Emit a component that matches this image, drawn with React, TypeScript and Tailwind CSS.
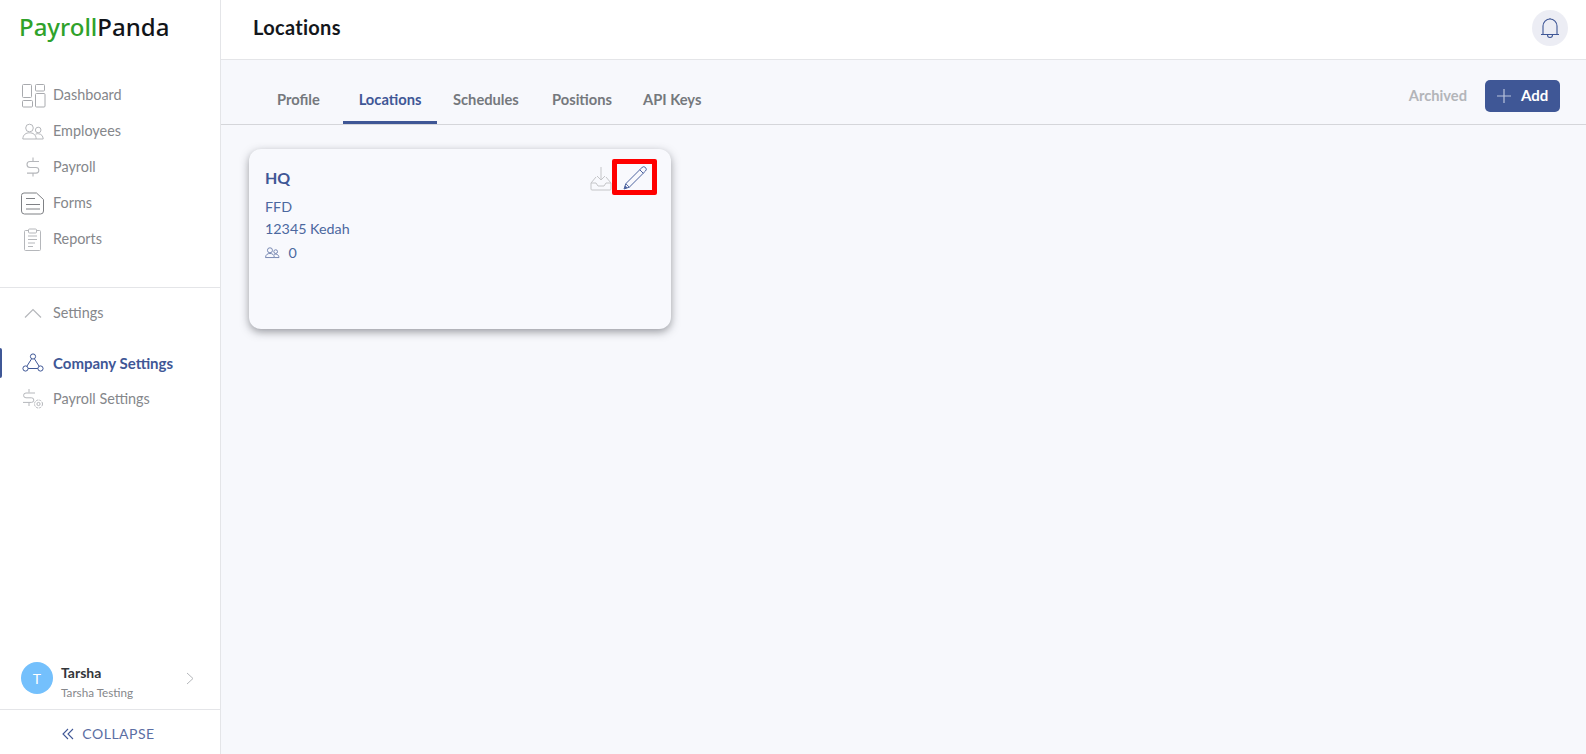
import React from "react";

const g = "#b5b7bb";
const blue = "#3f5796";

function Svg({ w, h, children, className = "" }: { w: number; h: number; children: React.ReactNode; className?: string }) {
  return (
    <svg width={w} height={h} viewBox={`0 0 ${w} ${h}`} fill="none" className={`shrink-0 ${className}`}>
      {children}
    </svg>
  );
}

const DashIcon = () => (
  <Svg w={25} h={25}>
    <g stroke="#a8aaae" strokeWidth="1">
      <rect x="1.5" y="1.5" width="9" height="13" rx="1" />
      <rect x="14.5" y="1.5" width="9" height="6.5" rx="1" />
      <rect x="1.5" y="17.5" width="10" height="6.5" rx="1" />
      <rect x="14.5" y="10.5" width="9.5" height="13.5" rx="1" />
    </g>
  </Svg>
);
const PeopleIcon = ({ c = g, s = 1 }: { c?: string; s?: number }) => (
  <svg width={22 * s} height={17 * s} viewBox="0 0 22 17" fill="none" className="shrink-0">
    <g stroke={c} strokeWidth={s < 1 ? 1.4 : 1}>
      <circle cx="7.5" cy="5" r="3.8" />
      <path d="M0.8 16 C1 11.5 4 9.8 7.5 9.8 C11 9.8 14 11.5 14.2 16 Z" />
      <circle cx="16.2" cy="7" r="2.8" />
      <path d="M13.5 11.2 C14.8 10.6 15.8 10.6 16.8 10.8 C19.5 11.2 21 13 21.2 16 L14.2 16" />
    </g>
  </svg>
);
const DollarIcon = () => (
  <Svg w={16} h={20}>
    <path d="M8 0.5v3.5M8 16v3.5M14 4.5H5a3 3 0 0 0 0 6h6a2.8 2.8 0 0 1 0 5.6H2" stroke={g} strokeWidth="1.1" />
  </Svg>
);
const FormIcon = () => (
  <Svg w={24} h={23}>
    <path d="M3 1h12.5l7 6.5V19a3 3 0 0 1-3 3H3.5a3 3 0 0 1-3-3V3.5A2.5 2.5 0 0 1 3 1Z" stroke="#7f8185" strokeWidth="1" />
    <path d="M5 6.5h9M5 12.5h14M5 17h14" stroke="#7f8185" strokeWidth="1" />
  </Svg>
);
const ReportIcon = () => (
  <Svg w={20} h={24}>
    <g stroke={g} strokeWidth="1">
      <rect x="1.5" y="3.5" width="16" height="20" rx="1" />
      <rect x="5.5" y="2" width="8" height="4" rx="1" fill="#fff" />
      <path d="M5 9h9M5 12.5h9M5 16h7M5 19.5h5" />
    </g>
  </Svg>
);
const NetIcon = () => (
  <Svg w={22} h={20}>
    <g stroke={blue} strokeWidth="1">
      <circle cx="11" cy="3.5" r="2.6" />
      <circle cx="3.5" cy="15.5" r="2.6" />
      <circle cx="18.5" cy="15.5" r="2.6" />
      <path d="M9.6 5.8 4.9 13.2M12.4 5.8l4.7 7.4M6.1 15.5h9.8" />
    </g>
  </Svg>
);
const PaySetIcon = () => (
  <Svg w={22} h={22}>
    <g stroke={g} strokeWidth="1">
      <path d="M7 1v3.5M7 14.5V18M13 5H4a2.4 2.4 0 0 0 0 4.8h5.5a2.3 2.3 0 0 1 0 4.6H1" />
      <circle cx="16.5" cy="16" r="4" fill="#fff" strokeDasharray="2.2 1" />
      <circle cx="16.5" cy="16" r="1.6" />
    </g>
  </Svg>
);

function Nav({ icon, label, active = false }: { icon: React.ReactNode; label: string; active?: boolean }) {
  return (
    <div className="relative h-9 flex items-center pl-[20px]">
      {active && <div className="absolute left-0 top-[3px] h-[30px] w-[2px] rounded-r bg-[#3f5796]" />}
      <div className="w-[26px] h-9 flex items-center justify-center mr-[7px]">{icon}</div>
      <span className={active ? "text-[15px] font-bold text-[#3f5796]" : "text-[14.4px] text-[#85878b]"}>{label}</span>
    </div>
  );
}

export default function App() {
  return (
    <div className="flex h-screen w-full overflow-hidden bg-[#f7f8fc] [font-family:Lato,'Noto_Sans',sans-serif]">
      <aside className="w-[221px] shrink-0 bg-white border-r border-[#e4e5e8] flex flex-col">
        <div className="h-[77px] pt-[12px] pl-[19px] text-[24px] font-medium leading-[30px] [font-family:'Noto_Sans',sans-serif]">
          <span className="text-[#2fa22b]">Payroll</span>
          <span className="text-[#111418]">Panda</span>
        </div>
        <nav>
          <Nav icon={<DashIcon />} label="Dashboard" />
          <Nav icon={<PeopleIcon />} label="Employees" />
          <Nav icon={<DollarIcon />} label="Payroll" />
          <Nav icon={<FormIcon />} label="Forms" />
          <Nav icon={<ReportIcon />} label="Reports" />
        </nav>
        <div className="mt-[30px] border-t border-[#e4e5e8] pt-[7px]">
          <Nav
            icon={
              <Svg w={18} h={10}>
                <path d="M1 9.5 9 1.5l8 8" stroke={g} strokeWidth="1.2" />
              </Svg>
            }
            label="Settings"
          />
        </div>
        <div className="mt-[14px]">
          <Nav active icon={<NetIcon />} label="Company Settings" />
          <Nav icon={<PaySetIcon />} label="Payroll Settings" />
        </div>
        <div className="mt-auto">
          <div className="h-[48px] flex items-center pl-[21px] pr-[26px]">
            <div className="w-8 h-8 -mt-[14px] rounded-full bg-[#74c0fc] text-white text-[14px] flex items-center justify-center">T</div>
            <div className="ml-2 flex-1 -mt-[6px]">
              <div className="text-[14px] leading-[20px] font-bold text-[#33363a]">Tarsha</div>
              <div className="text-[11.7px] leading-[19px] text-[#85878b]">Tarsha Testing</div>
            </div>
            <Svg w={8} h={13} className="-mt-[14px]">
              <path d="M1 1l6 5.5L1 12" stroke={g} strokeWidth="1" />
            </Svg>
          </div>
          <div className="border-t border-[#e4e5e8] h-[45px] flex items-center justify-center gap-[8px] pr-[3px] pt-[3px]">
            <Svg w={12} h={12}>
              <path d="M6 1 1 6l5 5M11 1 6 6l5 5" stroke={blue} strokeWidth="1.1" />
            </Svg>
            <span className="text-[14px] tracking-[0.5px] text-[#5a6ea3]">COLLAPSE</span>
          </div>
        </div>
      </aside>

      <main className="flex-1 flex flex-col min-w-0">
        <header className="h-[60px] shrink-0 bg-white border-b border-[#e4e5e8] flex items-center justify-between pl-[32px] pr-[18px]">
          <h1 className="text-[20px] tracking-[0.3px] font-bold text-[#14171c] -mt-[5px]">Locations</h1>
          <div className="w-9 h-9 rounded-full bg-[#ecedf4] flex items-center justify-center -mt-[3px]">
            <Svg w={20} h={22}>
              <path d="M3 17V9a7 7 0 0 1 14 0v8M1 17.5h18M7.5 18a2.5 2.5 0 0 0 5 0M10 2V1" stroke={blue} strokeWidth="1.1" />
            </Svg>
          </div>
        </header>

        <div className="h-[65px] shrink-0 border-b border-[#d5d6da] flex items-end justify-between pl-[40px] pr-[26px]">
          <div className="flex items-end text-[14.7px] font-bold text-[#75787d]">
            <div className="h-[50px] w-[82px] pl-[16px] flex items-center">Profile</div>
            <div className="h-[50px] w-[94px] flex items-center justify-center border-b-[3px] border-[#3f5796] pt-[3px] text-[#3f5796]">Locations</div>
            <div className="h-[50px] w-[115px] pl-[16px] flex items-center">Schedules</div>
            <div className="h-[50px] w-[91px] flex items-center">Positions</div>
            <div className="h-[50px] flex items-center">API Keys</div>
          </div>
          <div className="flex items-center self-start mt-[20px]">
            <span className="text-[14.7px] font-bold text-[#b3b5b9] mr-[18px] -mt-[1px]">Archived</span>
            <div className="w-[75px] h-[32px] rounded-[5px] bg-[#3f5796] flex items-center pl-[12px]">
              <Svg w={14} h={14}>
                <path d="M7 0v14M0 7h14" stroke="#b9c3dc" strokeWidth="1.2" />
              </Svg>
              <span className="ml-[10px] text-[15px] font-bold text-white -mt-[1px]">Add</span>
            </div>
          </div>
        </div>

        <div className="pt-[24px] pl-[28px]">
          <div className="relative w-[422px] h-[180px] rounded-[12px] bg-[#f8f9fd] shadow-[0_3px_8px_rgba(60,62,70,0.5)] pl-[16px] pt-[17px] text-[#3f5796]">
            <div className="text-[16px] leading-[24px] font-bold">HQ</div>
            <div className="mt-[6px] text-[14.3px] leading-[22px] text-[#4c689f]">FFD</div>
            <div className="text-[14.3px] leading-[22px] text-[#4c689f]">12345 Kedah</div>
            <div className="mt-[1px] flex items-center gap-[9px] text-[14.3px] leading-[24px] text-[#4c689f]">
              <PeopleIcon c="#6f80ad" s={0.66} />
              <span>0</span>
            </div>
            <div className="absolute right-[14px] top-[10px] flex items-center">
              <Svg w={22} h={24} className="mt-[3px]">
                <g stroke="#c4c5c8" strokeWidth="1">
                  <path d="M11 0v13M7 9l4 4 4-4" />
                  <path d="M6 10 1 16v6a1 1 0 0 0 1 1h18a1 1 0 0 0 1-1v-6l-5-6" />
                  <path d="M1 16h5l2 3h6l2-3h5" />
                </g>
              </Svg>
              <div className="w-[45px] h-[36px] border-[5px] border-[#ff0000] rounded-[2px] flex items-center justify-center">
                <Svg w={24} h={24} className="mt-[2px]">
                  <g stroke="#4d64a0" strokeWidth="1">
                    <path d="M19 1.5 2.8 17.7 1 23l5.3-1.8L22.5 5a2.4 2.4 0 0 0-3.5-3.5Z" />
                    <path d="M16.8 3.8l3.5 3.5M2.8 17.7l3.5 3.5" />
                  </g>
                  <path d="M1 23l1.2-3.6 2.4 2.4Z" fill="#4d64a0" />
                </Svg>
              </div>
            </div>
          </div>
        </div>
      </main>
    </div>
  );
}
